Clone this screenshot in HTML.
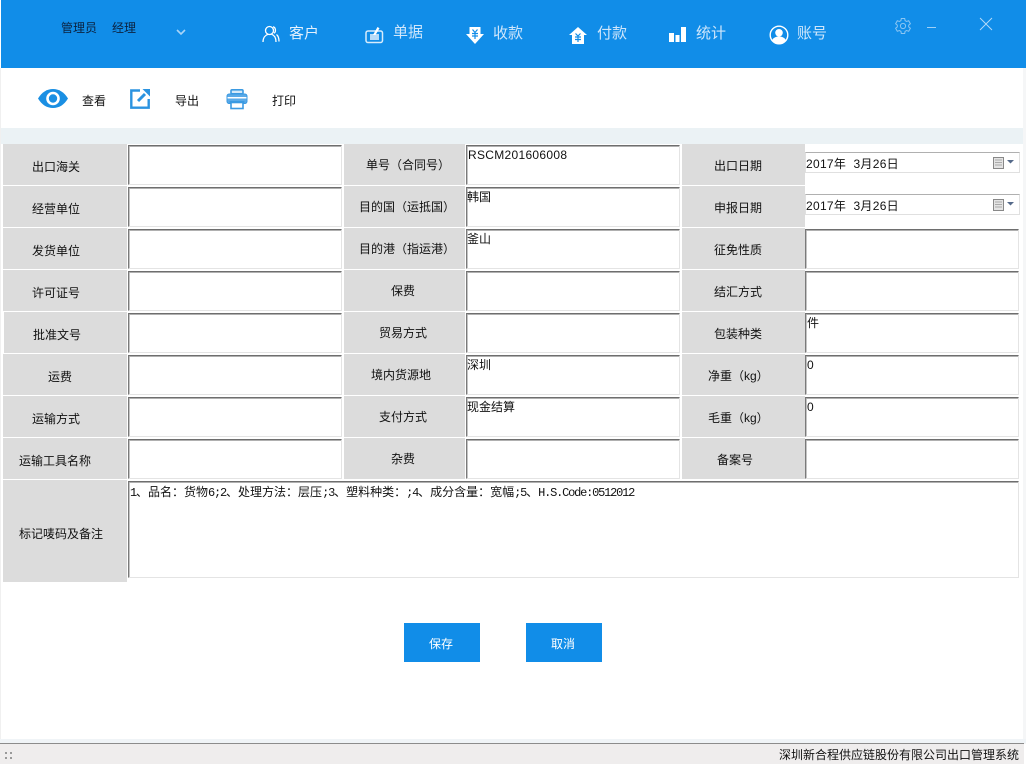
<!DOCTYPE html>
<html lang="zh"><head><meta charset="utf-8"><title>出口管理系统</title>
<style>
html,body{margin:0;padding:0}
body{width:1026px;height:773px;position:relative;overflow:hidden;background:#fff;font-family:"Liberation Sans","WenQuanYi Zen Hei","Noto Sans CJK SC",sans-serif;font-size:12px;color:#111}
div,span.a,svg{position:absolute}
.t{white-space:nowrap;line-height:16px}
.nav{font-size:15px;color:#cfe6fb;line-height:20px;white-space:nowrap}
.l{background:#dcdcdc;box-sizing:border-box;white-space:nowrap}
.c1{left:3px;width:124px;height:41px;line-height:46px}
.c2{left:344px;width:121px;height:41px;line-height:42px}
.c3{left:682px;width:123px;height:41px;line-height:44px}
.i{background:#fff;box-sizing:border-box;border-top:1px solid #6e6e6e;border-left:1px solid #7a7a7a;border-right:1px solid #e4e4e4;border-bottom:1px solid #e4e4e4;box-shadow:inset 0 1px #b0b0b0,inset 1px 0 #c4c4c4;padding-top:2px;line-height:14px;white-space:nowrap;width:214px;height:40px}
.r{left:805px;padding-left:1px}
.d{background:#fff;box-sizing:border-box;border:1px solid #e0e0e0;border-top-color:#b0b0b0;left:805px;width:215px;height:21px;line-height:22px;white-space:nowrap;letter-spacing:.3px}
.b{background:#118de8;color:#fff;width:76px;height:39px;top:623px;text-align:center;line-height:42px;text-indent:-2px}
.m{font-family:"Liberation Mono",monospace;font-size:12px;letter-spacing:-1.2px}
</style></head><body>
<div style="left:1px;top:0;width:1025px;height:68px;background:#118de8"></div>
<div class="t" style="left:61px;top:20px;color:#0b2240">管理员</div>
<div class="t" style="left:112px;top:20px;color:#0b2240">经理</div>
<svg style="left:175px;top:28px" width="12" height="9" viewBox="0 0 12 9"><path d="M2 2l4 4 4-4" fill="none" stroke="#a9d4f7" stroke-width="1.6"/></svg>

<svg style="left:262px;top:25px" width="18" height="18" viewBox="0 0 18 18" fill="none" stroke="#fff" stroke-width="1.3"><circle cx="7.5" cy="5.5" r="4"/><path d="M1 17c0-4.500 2.500-7 5-7.800M9.500 9.200C12 10 14 12.500 14 17M11 1.800c2.500.4 3.500 4.500 1 6.500M14.500 9.500c1.500 1.200 2.500 3.500 2.500 7"/></svg>
<div class="nav" style="left:289px;top:24px;color:#e4f1fd">客户</div>
<svg style="left:365px;top:25px" width="19" height="19" viewBox="0 0 19 19"><rect x="1" y="6" width="16.500" height="11.500" rx="2" fill="none" stroke="#d8ecfc" stroke-width="1.500"/><rect x="5" y="9" width="9" height="6" fill="#b9dcf8"/><path d="M8 10L12.500 2l2 1.200L10.500 10z" fill="#fff"/></svg>
<div class="nav" style="left:393px;top:23px">单据</div>
<svg style="left:466px;top:27px" width="18" height="17" viewBox="0 0 18 17"><path d="M3.500 0h11v7H18l-9 10L0 7h3.500z" fill="#fff"/><path d="M6.500 2.500L9 5.500l2.500-3M6 6.500h6M6 9h6M9 5.500V12" stroke="#118de8" stroke-width="1.200" fill="none"/></svg>
<div class="nav" style="left:493px;top:24px">收款</div>
<svg style="left:569px;top:27px" width="18" height="17" viewBox="0 0 18 17"><path d="M9 0l9 8h-3v9H3V8H0z" fill="#fff"/><path d="M6.500 6.500L9 9l2.500-2.500M6 10h6M6 12.500h6M9 9v6" stroke="#118de8" stroke-width="1.200" fill="none"/></svg>
<div class="nav" style="left:597px;top:24px">付款</div>
<svg style="left:669px;top:27px" width="17" height="15" viewBox="0 0 17 15" fill="#fff"><rect x="0" y="6" width="5" height="9"/><rect x="6.500" y="8" width="4" height="7"/><rect x="12" y="0" width="5" height="15"/></svg>
<div class="nav" style="left:696px;top:24px">统计</div>
<svg style="left:769px;top:25px" width="20" height="20" viewBox="0 0 20 20"><circle cx="10" cy="10" r="8.800" fill="#118de8" stroke="#fff" stroke-width="1.400"/><circle cx="10" cy="7.800" r="3.800" fill="#fff"/><path d="M3 15.500c1-2.500 3.500-4 7-4s6 1.500 7 4C15.500 17.500 12.500 18.800 10 18.800S4.500 17.500 3 15.500z" fill="#fff"/></svg>
<div class="nav" style="left:797px;top:24px">账号</div>
<svg style="left:894px;top:17px" width="18" height="18" viewBox="0 0 18 18" fill="none" stroke="#8cc6f3" stroke-width="1"><path d="M7.300 1.500h3.400l.4 2.200 1.500.8 2.100-.8 1.700 3-1.700 1.400v1.800l1.700 1.400-1.700 3-2.100-.8-1.500.8-.4 2.200H7.300l-.4-2.200-1.500-.8-2.100.8-1.700-3L3.300 9.900V8.100L1.600 6.700l1.700-3 2.100.8 1.500-.8z"/><circle cx="9" cy="9" r="2.600"/></svg>
<div style="left:927px;top:27px;width:9px;height:1px;background:#9fd0f6"></div>
<svg style="left:979px;top:17px" width="14" height="14" viewBox="0 0 14 14"><path d="M1 1l12 12M13 1L1 13" stroke="#b8dbf8" stroke-width=".9"/></svg>

<svg style="left:38px;top:88px" width="30" height="21" viewBox="0 0 30 21"><path d="M0 10.500C4 4 9 1 15 1s11 3 15 9.500C26 17 21 20 15 20S4 17 0 10.500z" fill="#1a8fe3"/><circle cx="15" cy="10.500" r="6.800" fill="#fff"/><circle cx="15" cy="10.500" r="4.200" fill="#1a8fe3"/></svg>
<div class="t" style="left:82px;top:93px">查看</div>
<svg style="left:130px;top:88px" width="21" height="21" viewBox="0 0 21 21" fill="none"><path d="M10 2.500H1.300v17.200h17.400V11" stroke="#2b93e0" stroke-width="2.400"/><path d="M8 13l7-7" stroke="#2b93e0" stroke-width="3"/><path d="M12.500 1H20v7.500z" fill="#2b93e0"/></svg>
<div class="t" style="left:175px;top:93px">导出</div>
<svg style="left:226px;top:88px" width="22" height="22" viewBox="0 0 22 22"><rect x="5" y="1.800" width="12" height="4" rx="1" fill="#d5e9f9" stroke="#3b9ae2" stroke-width="1.600"/><path d="M3 6h16c1 0 2 1 2 2v5.500c0 1-1 2-2 2h-1v-2H4v2H3c-1 0-2-1-2-2V8c0-1 1-2 2-2z" fill="#5aaae8" stroke="#3b9ae2"/><rect x="1.500" y="9" width="19" height="1.500" fill="#fff"/><rect x="5" y="14.500" width="12" height="6" fill="#fff" stroke="#3b9ae2" stroke-width="1.600"/></svg>
<div class="t" style="left:272px;top:93px">打印</div>

<div style="left:1px;top:128px;width:1022px;height:16px;background:#ebf2f5"></div>
<div style="left:0;top:68px;width:1px;height:676px;background:#f0f0f0"></div>
<div style="left:1023px;top:68px;width:3px;height:676px;background:#f5f6f7"></div>

<!-- row 1 -->
<div class="l c1" style="top:144px;padding-left:29px">出口海关</div>
<div class="i" style="left:128px;top:145px"></div>
<div class="l c2" style="top:144px;padding-left:22px">单号（合同号）</div>
<div class="i" style="left:466px;top:145px;padding-left:1px;letter-spacing:.3px">RSCM201606008</div>
<div class="l c3" style="top:144px;padding-left:32px">出口日期</div>
<div class="d" style="top:152px">2017年 &nbsp;3月26日</div>
<!-- row 2 -->
<div class="l c1" style="top:186px;padding-left:29px">经营单位</div>
<div class="i" style="left:128px;top:187px"></div>
<div class="l c2" style="top:186px;padding-left:15px">目的国（运抵国）</div>
<div class="i" style="left:466px;top:187px">韩国</div>
<div class="l c3" style="top:186px;padding-left:32px">申报日期</div>
<div class="d" style="top:194px">2017年 &nbsp;3月26日</div>
<!-- row 3 -->
<div class="l c1" style="top:228px;padding-left:29px">发货单位</div>
<div class="i" style="left:128px;top:229px"></div>
<div class="l c2" style="top:228px;padding-left:15px">目的港（指运港）</div>
<div class="i" style="left:466px;top:229px">釜山</div>
<div class="l c3" style="top:228px;padding-left:32px">征免性质</div>
<div class="i r" style="top:229px"></div>
<!-- row 4 -->
<div class="l c1" style="top:270px;padding-left:29px">许可证号</div>
<div class="i" style="left:128px;top:271px"></div>
<div class="l c2" style="top:270px;padding-left:47px">保费</div>
<div class="i" style="left:466px;top:271px"></div>
<div class="l c3" style="top:270px;padding-left:32px">结汇方式</div>
<div class="i r" style="top:271px"></div>
<!-- row 5 -->
<div class="l c1" style="left:4px;width:123px;top:312px;padding-left:29px">批准文号</div>
<div class="i" style="left:128px;top:313px"></div>
<div class="l c2" style="top:312px;padding-left:35px">贸易方式</div>
<div class="i" style="left:466px;top:313px"></div>
<div class="l c3" style="top:312px;padding-left:32px">包装种类</div>
<div class="i r" style="top:313px">件</div>
<!-- row 6 -->
<div class="l c1" style="top:354px;padding-left:45px">运费</div>
<div class="i" style="left:128px;top:355px"></div>
<div class="l c2" style="top:354px;padding-left:27px">境内货源地</div>
<div class="i" style="left:466px;top:355px">深圳</div>
<div class="l c3" style="top:354px;padding-left:26px">净重（kg）</div>
<div class="i r" style="top:355px">0</div>
<!-- row 7 -->
<div class="l c1" style="top:396px;padding-left:29px">运输方式</div>
<div class="i" style="left:128px;top:397px"></div>
<div class="l c2" style="top:396px;padding-left:35px">支付方式</div>
<div class="i" style="left:466px;top:397px">现金结算</div>
<div class="l c3" style="top:396px;padding-left:26px">毛重（kg）</div>
<div class="i r" style="top:397px">0</div>
<!-- row 8 -->
<div class="l c1" style="top:438px;padding-left:16px">运输工具名称</div>
<div class="i" style="left:128px;top:439px"></div>
<div class="l c2" style="top:438px;padding-left:47px">杂费</div>
<div class="i" style="left:466px;top:439px"></div>
<div class="l c3" style="top:438px;padding-left:35px">备案号</div>
<div class="i r" style="top:439px"></div>
<!-- remarks -->
<div class="l c1" style="top:480px;height:102px;line-height:108px;padding-left:16px">标记唛码及备注</div>
<div class="i" style="left:128px;top:481px;width:891px;height:97px;padding-left:1px;padding-top:3px"><span class="m">1</span>、品名：货物<span class="m">6;2</span>、处理方法：层压<span class="m">;3</span>、塑料种类：<span class="m">;4</span>、成分含量：宽幅<span class="m">;5</span>、<span class="m">H.S.Code:0512012</span></div>

<svg style="left:993px;top:157px" width="24" height="13" viewBox="0 0 24 13"><rect x=".5" y=".5" width="10" height="11" fill="#e4e4e4" stroke="#888"/><path d="M2 3h7M2 5.500h7M2 8h7" stroke="#aaa"/><path d="M14 3h7l-3.500 3.500z" fill="#556a8a"/></svg>
<svg style="left:993px;top:199px" width="24" height="13" viewBox="0 0 24 13"><rect x=".5" y=".5" width="10" height="11" fill="#e4e4e4" stroke="#888"/><path d="M2 3h7M2 5.500h7M2 8h7" stroke="#aaa"/><path d="M14 3h7l-3.500 3.500z" fill="#556a8a"/></svg>

<div class="b" style="left:404px">保存</div>
<div class="b" style="left:526px">取消</div>

<div style="left:0;top:739px;width:1026px;height:4px;background:#f0f4f7"></div>
<div style="left:0;top:743px;width:1024px;height:1px;background:#8c8c8c"></div>
<div style="left:0;top:744px;width:1024px;height:20px;background:#efeded"></div>
<div style="left:5px;top:752px;width:2px;height:2px;background:#999;box-shadow:0 5px #999,5px 5px #999,5px 0 #999"></div>
<div class="t" style="right:7px;top:747px;color:#111;font-size:12px">深圳新合程供应链股份有限公司出口管理系统</div>
</body></html>
